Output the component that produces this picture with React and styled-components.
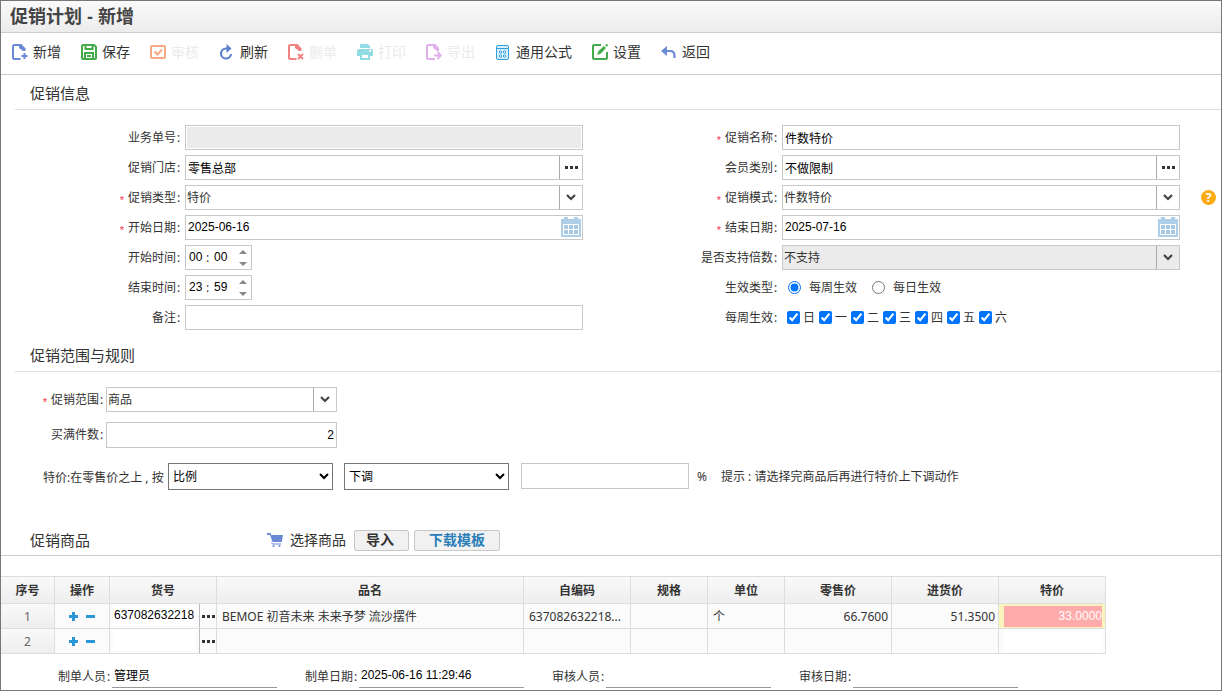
import React, { useState } from 'react'
import styled, { createGlobalStyle, css } from 'styled-components'


const WEEK_DAYS = ['日', '一', '二', '三', '四', '五', '六']

const COLUMNS = [
    { title: '序号', width: 54 },
    { title: '操作', width: 55 },
    { title: '货号', width: 107 },
    { title: '品名', width: 307 },
    { title: '自编码', width: 107 },
    { title: '规格', width: 77 },
    { title: '单位', width: 77 },
    { title: '零售价', width: 107 },
    { title: '进货价', width: 107 },
    { title: '特价', width: 107 },
]

const ROWS = [
    {
        code: '637082632218',
        name: 'BEMOE 初音未来 未来予梦 流沙摆件',
        selfCode: '637082632218...',
        spec: '',
        unit: '个',
        price: '66.7600',
        cost: '51.3500',
        special: '33.0000'
    },
    { code: '', name: '', selfCode: '', spec: '', unit: '', price: '', cost: '', special: '' },
]

const TOOLS = [
    { text: '新增', icon: 'add' },
    { text: '保存', icon: 'save' },
    { text: '审核', icon: 'audit', disabled: true },
    { text: '刷新', icon: 'refresh' },
    { text: '删单', icon: 'remove', disabled: true },
    { text: '打印', icon: 'print', disabled: true },
    { text: '导出', icon: 'export', disabled: true },
    { text: '通用公式', icon: 'formula' },
    { text: '设置', icon: 'settings' },
    { text: '返回', icon: 'back' },
]

const FOOTER = [
    { id: 'maker', text: '制单人员', value: '管理员' },
    { id: 'makeDate', text: '制单日期', value: '2025-06-16 11:29:46' },
    { id: 'auditor', text: '审核人员', value: '' },
    { id: 'auditDate', text: '审核日期', value: '' },
]

// toolbar drawings, 16 x 16 each
const ICONS = {
    add: (
        <g fill="none" stroke="#6b8ad5" strokeWidth="2">
            <path d="M8.500 15H2.500Q1 15 1 13.500V2.500Q1 1 2.500 1H8.500" />
            <path d="M7 0h2.500L13.500 4.500V7H11L7 4z" fill="#6b8ad5" stroke="none" />
            <path d="M12.500 9v6M9.500 12h6" />
        </g>
    ),
    save: (
        <g fill="none" stroke="#43ab49" strokeWidth="2">
            <path d="M2 1h11l2 2v11q0 1-1 1H2q-1 0-1-1V2q0-1 1-1z" />
            <path d="M4.500 1v4h7V1M4 15V9h8v6M6 12h4" />
        </g>
    ),
    audit: (
        <g fill="none" stroke="#f3a983" strokeWidth="2">
            <rect x="1" y="2" width="14" height="12" rx="1" />
            <path d="M4.500 7.500l3 3 4.500-5" />
        </g>
    ),
    refresh: (
        <g fill="none" stroke="#5d7fd0" strokeWidth="2.200">
            <path d="M8.500 4.500H7A5 5 0 1 0 12 10" />
            <path d="M7.500 0l5 4.500-5 4.500z" fill="#5d7fd0" stroke="none" />
        </g>
    ),
    remove: (
        <g fill="none" stroke="#f28080" strokeWidth="2">
            <path d="M8.500 15H2.500Q1 15 1 13.500V2.500Q1 1 2.500 1H8.500" />
            <path d="M7 0h2.500L13.500 4.500V7H11L7 4z" fill="#f28080" stroke="none" />
            <path d="M10 10l5 5M15 10l-5 5" />
        </g>
    ),
    print: (
        <g fill="#94dce3">
            <path d="M3 0h8l2 2v2H3z" />
            <path d="M2 5h12q2 0 2 2v5h-3v-2H3v2H0V7q0-2 2-2z" />
            <path d="M3 9h10v7H3zM5 11v3h6v-3z" fillRule="evenodd" />
            <circle cx="13" cy="7" r="1" fill="#fff" />
        </g>
    ),
    export: (
        <g fill="none" stroke="#dfb0ea" strokeWidth="2">
            <path d="M9 15H2.500Q1 15 1 13.500V2.500Q1 1 2.500 1H8.500" />
            <path d="M7 0h2.500L13 4v3h-2L7 4z" fill="#dfb0ea" stroke="none" />
            <path d="M8 11.500h6M11.500 8l3.200 3.500-3.200 3.500" />
        </g>
    ),
    formula: (
        <g fill="none" stroke="#2d9fdd">
            <rect x="1.500" y="1.500" width="12" height="14" rx="1.500" fill="#d9effb" />
            <path d="M2 4.500h11" />
            <circle cx="5.500" cy="8" r="1.200" fill="#fff" />
            <circle cx="9.500" cy="8" r="1.200" fill="#fff" />
            <circle cx="5.500" cy="12" r="1.200" fill="#fff" />
            <circle cx="9.500" cy="12" r="1.200" fill="#fff" />
        </g>
    ),
    settings: (
        <g fill="none" stroke="#43ab49" strokeWidth="2">
            <path d="M9 1H2q-1 0-1 1v12q0 1 1 1h12q1 0 1-1V8" />
            <path d="M5 11l1.500-4L12 2l2 2-5 5.500z" fill="#43ab49" stroke="none" />
            <path d="M13 1l2-1 1 1-1 2z" fill="#43ab49" stroke="none" />
        </g>
    ),
    back: (
        <g fill="none" stroke="#6b8ad5" strokeWidth="2.200">
            <path d="M4 7h5q4.500 0 4.500 4.500V14" />
            <path d="M0 7l6-5v10z" fill="#6b8ad5" stroke="none" />
        </g>
    ),
}

function Dots() {
    return (
        <svg width="13" height="3" aria-hidden="true">
            <path d="M0 0h3v3H0zM5 0h3v3H5zM10 0h3v3h-3z" fill="#333" />
        </svg>
    )
}

function Calendar() {
    return (
        <svg width="20" height="20" aria-hidden="true">
            <path d="M0 2h3V0h4v2h6V0h4v2h3v18H0z" fill="#afcfe9" />
            <path d="M2 7h16v11H2z" fill="#fff" />
            <path d="M3 8h4v4H3zM8 8h4v4H8zM13 8h4v4h-4zM3 13h4v4H3zM8 13h4v4H8zM13 13h4v4h-4z" fill="#a9c8e2" />
        </svg>
    )
}

function Label({ id, required, children }) {
    return (
        <FieldLabel htmlFor={id}>
            {required && <Star>*</Star>}
            {children}
            <Colon>:</Colon>
        </FieldLabel>
    )
}

function Combo({ id, value, disabled }) {
    return (
        <ComboBox $disabled={disabled}>
            <ComboSelect id={id} disabled={disabled} defaultValue={value}>
                <option>{value}</option>
            </ComboSelect>
            <ComboArrow>
                <svg width="10" height="7" aria-hidden="true">
                    <path d="M1 1l4 4 4-4" fill="none" stroke="#444" strokeWidth="2.200" />
                </svg>
            </ComboArrow>
        </ComboBox>
    )
}

function Lookup({ id, value, title }) {
    return (
        <FieldBox>
            <TextInput id={id} defaultValue={value} />
            <SideButton type="button" aria-label={title}><Dots /></SideButton>
        </FieldBox>
    )
}

function DateField({ id, value }) {
    return (
        <FieldBox>
            <TextInput id={id} defaultValue={value} />
            <CalendarButton type="button" aria-label="选择日期"><Calendar /></CalendarButton>
        </FieldBox>
    )
}

function TimeField({ id, hour, minute, title }) {
    return (
        <TimeBox>
            <TimeInput id={id} defaultValue={hour} />
            <TimeColon>:</TimeColon>
            <TimeInput defaultValue={minute} aria-label={title + '分钟'} />
            <Spinner>
                <SpinButton type="button" aria-label="增加">
                    <svg width="8" height="4"><path d="M4 0l4 4H0z" fill="#888" /></svg>
                </SpinButton>
                <SpinButton type="button" aria-label="减少">
                    <svg width="8" height="4"><path d="M4 4L0 0h8z" fill="#888" /></svg>
                </SpinButton>
            </Spinner>
        </TimeBox>
    )
}

function App() {
    const [cycle, setCycle] = useState('week')

    return (
        <Page>
            <GlobalStyle />
            <Header>
                <Title>促销计划 - 新增</Title>
            </Header>
            <Toolbar>
                {
                    TOOLS.map(tool => (
                        <ToolButton key={tool.icon} type="button" disabled={tool.disabled}>
                            <svg width="16" height="16" viewBox="0 0 16 16" aria-hidden="true">
                                {ICONS[tool.icon]}
                            </svg>
                            {tool.text}
                        </ToolButton>
                    ))
                }
            </Toolbar>

            <SectionHead>促销信息</SectionHead>
            <InfoForm>
                <Label id="billNo">业务单号</Label>
                <FieldBox $disabled><TextInput id="billNo" disabled /></FieldBox>
                <Label id="promoName" required>促销名称</Label>
                <FieldBox><TextInput id="promoName" defaultValue="件数特价" /></FieldBox>
                <span />

                <Label id="store">促销门店</Label>
                <Lookup id="store" value="零售总部" title="选择门店" />
                <Label id="member">会员类别</Label>
                <Lookup id="member" value="不做限制" title="选择会员类别" />
                <span />

                <Label id="promoType" required>促销类型</Label>
                <Combo id="promoType" value="特价" />
                <Label id="promoMode" required>促销模式</Label>
                <Combo id="promoMode" value="件数特价" />
                <HelpButton type="button" aria-label="帮助">?</HelpButton>

                <Label id="startDate" required>开始日期</Label>
                <DateField id="startDate" value="2025-06-16" />
                <Label id="endDate" required>结束日期</Label>
                <DateField id="endDate" value="2025-07-16" />
                <span />

                <Label id="startTime">开始时间</Label>
                <TimeField id="startTime" hour="00" minute="00" title="开始时间" />
                <Label id="multiple">是否支持倍数</Label>
                <Combo id="multiple" value="不支持" disabled />
                <span />

                <Label id="endTime">结束时间</Label>
                <TimeField id="endTime" hour="23" minute="59" title="结束时间" />
                <Label id="cycleWeek">生效类型</Label>
                <RadioGroup>
                    <RadioLabel>
                        <Tick
                            id="cycleWeek"
                            type="radio"
                            name="cycle"
                            checked={cycle === 'week'}
                            onChange={() => setCycle('week')}
                        />
                        每周生效
                    </RadioLabel>
                    <RadioLabel>
                        <Tick
                            type="radio"
                            name="cycle"
                            checked={cycle === 'day'}
                            onChange={() => setCycle('day')}
                        />
                        每日生效
                    </RadioLabel>
                </RadioGroup>
                <span />

                <Label id="remark">备注</Label>
                <FieldBox><TextInput id="remark" /></FieldBox>
                <Label id="day0">每周生效</Label>
                <CheckGroup>
                    {
                        WEEK_DAYS.map((day, i) => (
                            <CheckLabel key={day}>
                                <Tick id={'day' + i} type="checkbox" defaultChecked />
                                {day}
                            </CheckLabel>
                        ))
                    }
                </CheckGroup>
                <span />
            </InfoForm>

            <SectionHead>促销范围与规则</SectionHead>
            <RuleForm>
                <Label id="scope" required>促销范围</Label>
                <Combo id="scope" value="商品" />
                <Label id="fullCount">买满件数</Label>
                <FieldBox><TextInput id="fullCount" defaultValue="2" $right /></FieldBox>
            </RuleForm>
            <AdjustRow>
                <AdjustLabel htmlFor="adjustBy">特价:在零售价之上 , 按</AdjustLabel>
                <PlainSelect id="adjustBy" defaultValue="比例">
                    <option>比例</option>
                    <option>金额</option>
                </PlainSelect>
                <PlainSelect aria-label="调整方向" defaultValue="下调">
                    <option>下调</option>
                    <option>上调</option>
                </PlainSelect>
                <RateBox><TextInput aria-label="调整比例" /></RateBox>
                <Percent>%</Percent>
                <span>提示 : 请选择完商品后再进行特价上下调动作</span>
            </AdjustRow>

            <GoodsHead>
                <GoodsTitle>促销商品</GoodsTitle>
                <PickButton type="button">
                    <svg width="16" height="14" viewBox="0 0 16 14" aria-hidden="true">
                        <path d="M0 0h3.500l.8 2H16l-1.200 7H5.500L3 2H0z" fill="#6b8ad5" />
                        <path d="M4.500 9.500l1 1.500H14" fill="none" stroke="#6b8ad5" />
                        <circle cx="6.500" cy="13" r="1" fill="#6b8ad5" />
                        <circle cx="12.500" cy="13" r="1" fill="#6b8ad5" />
                    </svg>
                    选择商品
                </PickButton>
                <SmallButton type="button">导入</SmallButton>
                <SmallButton type="button" $blue>下载模板</SmallButton>
            </GoodsHead>

            <GoodsTable>
                <colgroup>
                    {COLUMNS.map(col => <Col key={col.title} $width={col.width} />)}
                </colgroup>
                <thead>
                    <tr>
                        {COLUMNS.map(col => <HeadCell key={col.title} scope="col">{col.title}</HeadCell>)}
                    </tr>
                </thead>
                <tbody>
                    {
                        ROWS.map((row, i) => (
                            <tr key={i}>
                                <IndexCell>{i + 1}</IndexCell>
                                <Cell>
                                    <Actions>
                                        <IconButton type="button" aria-label="插入行">
                                            <svg width="9" height="9"><path d="M3 0h3v3h3v3H6v3H3V6H0V3h3z" fill="#2b97d9" /></svg>
                                        </IconButton>
                                        <IconButton type="button" aria-label="删除行">
                                            <svg width="9" height="9"><path d="M0 3h9v3H0z" fill="#2b97d9" /></svg>
                                        </IconButton>
                                    </Actions>
                                </Cell>
                                <Cell>
                                    <CodeBox>
                                        <CodeInput defaultValue={row.code} aria-label="货号" />
                                        <CodeButton type="button" aria-label="选择货号"><Dots /></CodeButton>
                                    </CodeBox>
                                </Cell>
                                <Cell>{row.name}</Cell>
                                <Cell>{row.selfCode}</Cell>
                                <Cell>{row.spec}</Cell>
                                <Cell>{row.unit}</Cell>
                                <Cell $right>{row.price}</Cell>
                                <Cell $right>{row.cost}</Cell>
                                <SpecialCell $active={row.special !== ''}>
                                    <SpecialInput
                                        defaultValue={row.special}
                                        $active={row.special !== ''}
                                        aria-label="特价"
                                    />
                                </SpecialCell>
                            </tr>
                        ))
                    }
                </tbody>
            </GoodsTable>

            <Footer>
                {
                    FOOTER.map(item => (
                        <FooterItem key={item.id}>
                            <FooterLabel htmlFor={item.id}>{item.text}<Colon>:</Colon></FooterLabel>
                            <FooterInput id={item.id} defaultValue={item.value} readOnly />
                        </FooterItem>
                    ))
                }
            </Footer>
        </Page>
    )
}

export default App

const GlobalStyle = createGlobalStyle`
    * {
        box-sizing: border-box;
    }

    body {
        margin: 0;
        background: #fff;
        color: #333;
        font-family: "Noto Sans", "Noto Sans CJK SC", sans-serif;
        font-size: 12px;
        line-height: 18px;
    }

    button, input, select {
        margin: 0;
        font-family: inherit;
        font-size: 12px;
    }

    svg {
        display: block;
        flex: none;
    }
`;

const bareButton = css`
    padding: 0;
    border: 0;
    background: none;
    color: #333;
    cursor: pointer;
`;

const Page = styled.main`
    min-height: 100vh;
    padding-bottom: 2px;
    border: 1px solid #777;
`;

const Header = styled.header`
    display: flex;
    align-items: center;
    height: 32px;
    padding: 0 9px;
    border-bottom: 1px solid #ccc;
    background: linear-gradient(#fafafa, #ececec);
`;

const Title = styled.h1`
    margin: 0;
    font-family: "Liberation Sans", "Noto Sans CJK SC", sans-serif;
    font-size: 18px;
    line-height: 24px;
    font-weight: 700;
    color: #444;
`;

const Toolbar = styled.div`
    display: flex;
    align-items: center;
    gap: 20px;
    height: 42px;
    padding: 0 11px 4px;
    border-bottom: 1px solid #ccc;
`;

const ToolButton = styled.button`
    ${bareButton}
    display: flex;
    align-items: center;
    gap: 5px;
    font-size: 14px;
    line-height: 20px;
    white-space: nowrap;

    &:disabled {
        color: #ebebeb;
        cursor: default;
    }
`;

const SectionHead = styled.h2`
    display: flex;
    align-items: center;
    height: 35px;
    margin: 0 0 0 14px;
    padding: 2px 0 0 15px;
    border-bottom: 1px solid #ddd;
    font-size: 15px;
    font-weight: 400;
`;

const InfoForm = styled.form`
    display: grid;
    grid-template-columns: 184px minmax(0, 1fr) 199px minmax(0, 1fr) 41px;
    grid-auto-rows: 25px;
    row-gap: 5px;
    padding: 15px 0 7px;
`;

const FieldLabel = styled.label`
    display: flex;
    align-items: center;
    justify-content: flex-end;
    padding-right: 4px;
    white-space: nowrap;
`;

const Star = styled.span`
    margin-right: 4px;
    padding-top: 5px;
    font-family: "Liberation Sans", sans-serif;
    font-size: 11px;
    color: #f0344a;
`;

const Colon = styled.span`
    display: inline-block;
    width: 5px;
    padding-left: 1px;
`;

const FieldBox = styled.div`
    display: flex;
    align-items: stretch;
    padding: ${props => props.$disabled ? '1px' : '0'};
    border: 1px solid #c8c8c8;
    background: #fff;
`;

const TextInput = styled.input`
    flex: 1;
    min-width: 0;
    width: 100%;
    padding: 0 2px 1px;
    border: 0;
    outline: 0;
    background: transparent;
    font-family: "Liberation Sans", "Noto Sans CJK SC", sans-serif;
    color: #000;
    text-align: ${props => props.$right ? 'right' : 'left'};

    &:disabled {
        background: #ebebeb;
    }
`;

const SideButton = styled.button`
    ${bareButton}
    display: grid;
    place-items: center;
    width: 23px;
    border-left: 1px solid #aaa;
`;

const CalendarButton = styled.button`
    ${bareButton}
    display: grid;
    place-items: start center;
    width: 22px;
    padding-top: 1px;
`;

const ComboBox = styled.div`
    display: grid;
    border: 1px solid #c8c8c8;
    background: ${props => props.$disabled ? '#ebebeb' : '#fff'};
`;

const ComboSelect = styled.select`
    grid-area: 1 / 1;
    min-width: 0;
    padding: 0 24px 0 1px;
    border: 0;
    outline: 0;
    appearance: none;
    background: transparent;
    color: #333;
    opacity: 1;
`;

const ComboArrow = styled.span`
    grid-area: 1 / 1;
    justify-self: end;
    display: grid;
    place-items: center;
    width: 23px;
    border-left: 1px solid #aaa;
    pointer-events: none;
`;

const TimeBox = styled.div`
    display: flex;
    align-items: center;
    width: 67px;
    padding-left: 3px;
    border: 1px solid #c8c8c8;
`;

const TimeInput = styled.input`
    width: 14px;
    padding: 0 0 1px;
    border: 0;
    outline: 0;
    background: transparent;
    font-family: "Liberation Sans", sans-serif;
    color: #000;
`;

const TimeColon = styled.span`
    width: 11px;
    padding-right: 2px;
    text-align: center;
`;

const Spinner = styled.div`
    display: flex;
    flex-direction: column;
    gap: 8px;
    margin-left: auto;
    padding-right: 4px;
`;

const SpinButton = styled.button`
    ${bareButton}
`;

const RadioGroup = styled.div`
    display: flex;
    align-items: center;
    gap: 15px;
    padding-left: 6px;
`;

const RadioLabel = styled.label`
    display: flex;
    align-items: center;
    gap: 8px;
`;

const CheckGroup = styled.div`
    display: flex;
    align-items: center;
    gap: 4px;
    padding-left: 5px;
`;

const CheckLabel = styled.label`
    display: flex;
    align-items: center;
    gap: 3px;
`;

const Tick = styled.input`
    width: 13px;
    height: 13px;
`;

const HelpButton = styled.button`
    ${bareButton}
    place-self: center end;
    width: 15px;
    height: 15px;
    margin-right: 5px;
    border-radius: 50%;
    background: #fcac12;
    color: #fff;
    font-weight: 700;
    line-height: 15px;
    text-align: center;
`;

const RuleForm = styled.form`
    display: grid;
    grid-template-columns: 105px 231px;
    grid-template-rows: 25px 26px;
    row-gap: 10px;
    padding: 15px 0;

    ${FieldLabel} {
        padding-right: 2px;
    }
`;

const AdjustRow = styled.div`
    display: flex;
    align-items: center;
    padding-left: 42px;
    white-space: nowrap;
`;

const AdjustLabel = styled.label`
    width: 125px;
    padding-top: 2px;
`;

const PlainSelect = styled.select`
    width: 165px;
    height: 27px;
    margin-right: 11px;
    background: #fff;
    color: #000;
`;

const RateBox = styled(FieldBox)`
    align-self: flex-start;
    width: 168px;
    height: 26px;
    margin-left: 1px;
`;

const Percent = styled.span`
    width: 32px;
    padding-left: 8px;
`;

const GoodsHead = styled.div`
    display: flex;
    align-items: center;
    height: 31px;
    margin-top: 35px;
    padding-left: 29px;
    border-bottom: 1px solid #ccc;
`;

const GoodsTitle = styled.h2`
    width: 237px;
    margin: 0;
    font-size: 15px;
    font-weight: 400;
`;

const PickButton = styled.button`
    ${bareButton}
    display: flex;
    align-items: center;
    gap: 7px;
    margin-right: 8px;
    font-size: 14px;
    line-height: 20px;
`;

const SmallButton = styled.button`
    height: 21px;
    margin-right: 5px;
    padding: ${props => props.$blue ? '0 14px' : '0 14px 0 11px'};
    border: 1px solid #c8c8c8;
    border-radius: 2px;
    background: #f1f1f1;
    color: ${props => props.$blue ? '#2a7fb8' : '#333'};
    font-size: 14px;
    font-weight: 700;
    line-height: 18px;
    cursor: pointer;
`;

const GoodsTable = styled.table`
    width: 1105px;
    margin-top: 20px;
    border-top: 1px solid #ddd;
    border-spacing: 0;
    table-layout: fixed;
`;

const Col = styled.col`
    width: ${props => props.$width}px;
`;

const HeadCell = styled.th`
    height: 27px;
    padding: 2px 0 0;
    border-right: 1px solid #ddd;
    border-bottom: 1px solid #ddd;
    background: linear-gradient(#f9f9f9, #eee);
    font-weight: 700;
`;

const Cell = styled.td`
    height: 25px;
    padding: 2px ${props => props.$right ? '3px' : '5px'} 0;
    border-right: 1px solid #ddd;
    border-bottom: 1px solid #ddd;
    background: #fbfbfb;
    text-align: ${props => props.$right ? 'right' : 'left'};
    white-space: nowrap;

    &:has(div) {
        padding: 0;
    }
`;

const IndexCell = styled(Cell)`
    background: linear-gradient(#f9f9f9, #eee);
    color: #666;
    text-align: center;
`;

const Actions = styled.div`
    display: flex;
    justify-content: center;
    gap: 8px;
`;

const IconButton = styled.button`
    ${bareButton}
`;

const CodeBox = styled.div`
    display: flex;
    height: 24px;
    padding-left: 3px;
`;

const CodeInput = styled.input`
    width: 83px;
    height: 22px;
    padding: 0 1px;
    border: 0;
    outline: 0;
    background: #fff;
    font-family: "Liberation Sans", sans-serif;
    color: #000;
`;

const CodeButton = styled.button`
    ${bareButton}
    display: grid;
    place-items: center;
    flex: 1;
    margin-left: 3px;
    border-left: 1px solid #bbb;
`;

const SpecialCell = styled(Cell)`
    padding: 0 3px 0 5px;
    background: ${props => props.$active ? '#f9f5bd' : '#fbfbfb'};
`;

const SpecialInput = styled.input`
    display: block;
    width: 100%;
    height: 21px;
    padding: 0;
    border: 0;
    outline: 0;
    background: ${props => props.$active ? '#ffabab' : '#fff'};
    color: #fff;
    font-family: "Liberation Sans", sans-serif;
    text-align: right;
`;

const Footer = styled.footer`
    display: flex;
    gap: 28px;
    margin-top: 8px;
    padding-left: 57px;
`;

const FooterItem = styled.div`
    display: grid;
    grid-template-columns: 54px 165px;
    align-items: center;
    height: 26px;
    white-space: nowrap;
`;

const FooterLabel = styled.label`
    padding-top: 4px;
`;

const FooterInput = styled.input`
    align-self: stretch;
    min-width: 0;
    padding: 0 2px;
    border: 0;
    border-bottom: 1px solid #999;
    outline: 0;
    background: transparent;
    font-family: "Liberation Sans", "Noto Sans CJK SC", sans-serif;
    color: #000;
`;
